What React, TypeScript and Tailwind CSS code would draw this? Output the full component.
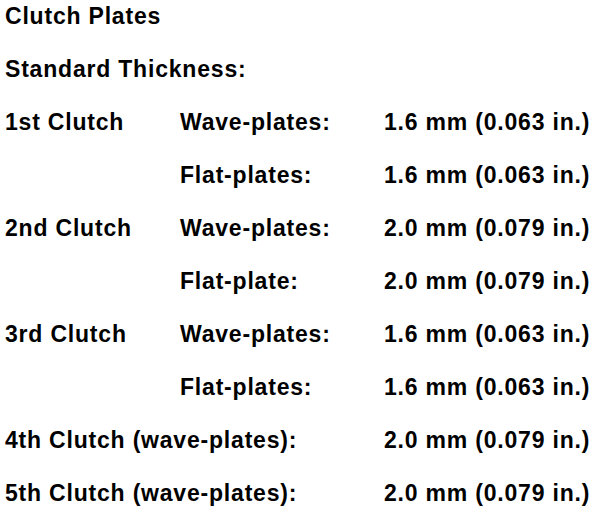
const rows: { a?: string; b?: string; span?: string; v: string }[] = [
  { a: "1st Clutch", b: "Wave-plates:", v: "1.6 mm (0.063 in.)" },
  { b: "Flat-plates:", v: "1.6 mm (0.063 in.)" },
  { a: "2nd Clutch", b: "Wave-plates:", v: "2.0 mm (0.079 in.)" },
  { b: "Flat-plate:", v: "2.0 mm (0.079 in.)" },
  { a: "3rd Clutch", b: "Wave-plates:", v: "1.6 mm (0.063 in.)" },
  { b: "Flat-plates:", v: "1.6 mm (0.063 in.)" },
  { span: "4th Clutch (wave-plates):", v: "2.0 mm (0.079 in.)" },
  { span: "5th Clutch (wave-plates):", v: "2.0 mm (0.079 in.)" },
]

export default function App() {
  return (
    <div className="w-[608px] h-[514px] bg-white text-black font-bold text-[23px] leading-[28px] tracking-[0.8px] pl-[5px] pt-[2px] font-['Liberation_Sans',Arial,sans-serif] overflow-hidden">
      <div className="flex flex-col gap-y-[25px]">
        <div>Clutch Plates</div>
        <div>Standard Thickness:</div>
        {rows.map((r, i) => (
          <div key={i} className="grid grid-cols-[175px_204px_1fr]">
            {r.span ? (
              <div className="col-span-2">{r.span}</div>
            ) : (
              <>
                <div>{r.a ?? ""}</div>
                <div>{r.b}</div>
              </>
            )}
            <div>{r.v}</div>
          </div>
        ))}
      </div>
    </div>
  )
}
